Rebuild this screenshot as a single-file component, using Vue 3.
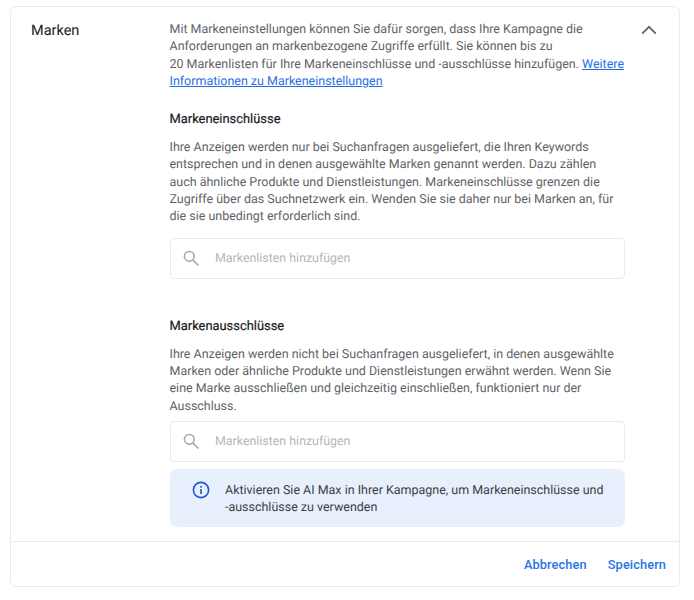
<script setup>
const placeholder = 'Markenlisten hinzufügen'
</script>

<template>
  <div class="page">
    <section class="card">
      <div class="main">
        <h2 class="title">Marken</h2>
        <div class="content">
          <p class="text">
            Mit Markeneinstellungen können Sie dafür sorgen, dass Ihre Kampagne die<br>
            Anforderungen an markenbezogene Zugriffe erfüllt. Sie können bis zu<br>
            20 Markenlisten für Ihre Markeneinschlüsse und -ausschlüsse hinzufügen. <a class="link" href="#">Weitere<br>Informationen zu Markeneinstellungen</a>
          </p>
          <h3 class="sub first">Markeneinschlüsse</h3>
          <p class="text">
            Ihre Anzeigen werden nur bei Suchanfragen ausgeliefert, die Ihren Keywords<br>
            entsprechen und in denen ausgewählte Marken genannt werden. Dazu zählen<br>
            auch ähnliche Produkte und Dienstleistungen. Markeneinschlüsse grenzen die<br>
            Zugriffe über das Suchnetzwerk ein. Wenden Sie sie daher nur bei Marken an, für<br>
            die sie unbedingt erforderlich sind.
          </p>
          <div class="search gap-a">
            <svg class="search-icon" viewBox="0 0 24 24" width="21" height="21"><circle cx="9.5" cy="9.5" r="5.6" fill="none" stroke="#a6a8ab" stroke-width="1.8"/><path d="M13.8 13.8 20 20" stroke="#a6a8ab" stroke-width="1.8" fill="none"/></svg>
            <span class="ph">{{ placeholder }}</span>
          </div>
          <h3 class="sub second">Markenausschlüsse</h3>
          <p class="text">
            Ihre Anzeigen werden nicht bei Suchanfragen ausgeliefert, in denen ausgewählte<br>
            Marken oder ähnliche Produkte und Dienstleistungen erwähnt werden. Wenn Sie<br>
            eine Marke ausschließen und gleichzeitig einschließen, funktioniert nur der<br>
            Ausschluss.
          </p>
          <div class="search gap-b">
            <svg class="search-icon" viewBox="0 0 24 24" width="21" height="21"><circle cx="9.5" cy="9.5" r="5.6" fill="none" stroke="#a6a8ab" stroke-width="1.8"/><path d="M13.8 13.8 20 20" stroke="#a6a8ab" stroke-width="1.8" fill="none"/></svg>
            <span class="ph">{{ placeholder }}</span>
          </div>
          <div class="notice">
            <svg class="info" viewBox="0 0 18 18" width="18" height="18"><circle cx="9" cy="9" r="7.6" fill="none" stroke="#1a56d6" stroke-width="1.6"/><rect x="8.2" y="8" width="1.6" height="5" fill="#1a56d6"/><rect x="8.2" y="5" width="1.6" height="1.7" fill="#1a56d6"/></svg>
            <p class="notice-text">Aktivieren Sie AI Max in Ihrer Kampagne, um Markeneinschlüsse und<br>-ausschlüsse zu verwenden</p>
          </div>
        </div>
        <svg class="chevron" viewBox="0 0 16 10" width="16" height="10"><path d="M1.2 8.6 8 1.8l6.8 6.8" fill="none" stroke="#5f6368" stroke-width="1.7"/></svg>
      </div>
      <footer class="footer">
        <button class="btn">Abbrechen</button>
        <button class="btn">Speichern</button>
      </footer>
    </section>
  </div>
</template>

<style>
html, body { margin: 0; background: #fff; }
</style>

<style scoped>
.page {
  width: 694px;
  height: 600px;
  padding: 6px 14px 0 10px;
  box-sizing: border-box;
  font-family: Roboto, "Liberation Sans", sans-serif;
  text-rendering: geometricPrecision;
  overflow: hidden;
}
.card {
  width: 670px;
  height: 581px;
  box-sizing: border-box;
  border: 1px solid #e8eaed;
  border-radius: 6px;
  background: #fff;
  display: flex;
  flex-direction: column;
}
.main {
  flex: 1;
  display: flex;
  position: relative;
  padding: 14px 54px 0 20px;
}
.title {
  width: 138.5px;
  flex: none;
  margin: 0;
  padding-top: 1px;
  font-size: 14.5px;
  line-height: 18px;
  font-weight: 400;
  color: #202124;
}
.content { flex: 1; min-width: 0; }
.text {
  margin: 0;
  font-size: 12.48px;
  line-height: 17.3px;
  color: #5f6368;
  white-space: nowrap;
}
.link { color: #1f6fe8; text-decoration: underline; }
.sub {
  margin: 0;
  font-size: 12.9px;
  line-height: 18px;
  font-weight: 400;
  color: #1b1c1f;
  -webkit-text-stroke: 0.2px #1b1c1f;
}
.first { margin-top: 21px; margin-bottom: 10px; }
.second { margin-top: 39px; margin-bottom: 10px; }
.search {
  height: 41px;
  box-sizing: border-box;
  border: 1px solid #e8eaed;
  border-radius: 4px;
  display: flex;
  align-items: center;
  padding-left: 10px;
}
.gap-a { margin-top: 12px; }
.gap-b { margin-top: 6px; }
.search-icon { flex: none; }
.ph {
  margin-left: 13.5px;
  font-size: 12.4px;
  color: #b4b6b9;
}
.notice {
  margin-top: 7px;
  height: 58px;
  box-sizing: border-box;
  border-radius: 7px;
  background: #e8f0fe;
  display: flex;
  align-items: flex-start;
  padding: 13px 0 0 22px;
}
.info { flex: none; margin-top: -1px; }
.notice-text {
  margin: 0 0 0 15.5px;
  font-size: 12.48px;
  line-height: 17.3px;
  color: #3c4043;
  white-space: nowrap;
}
.chevron { position: absolute; top: 18px; right: 22px; }
.footer {
  height: 44px;
  flex: none;
  border-top: 1px solid #e8eaed;
  display: flex;
  justify-content: flex-end;
  align-items: center;
  gap: 21px;
  padding-right: 13px;
}
.btn {
  border: 0;
  background: none;
  padding: 0;
  font-family: inherit;
  font-size: 12.8px;
  letter-spacing: 0.1px;
  font-weight: 500;
  color: #2a74e8;
}
</style>
